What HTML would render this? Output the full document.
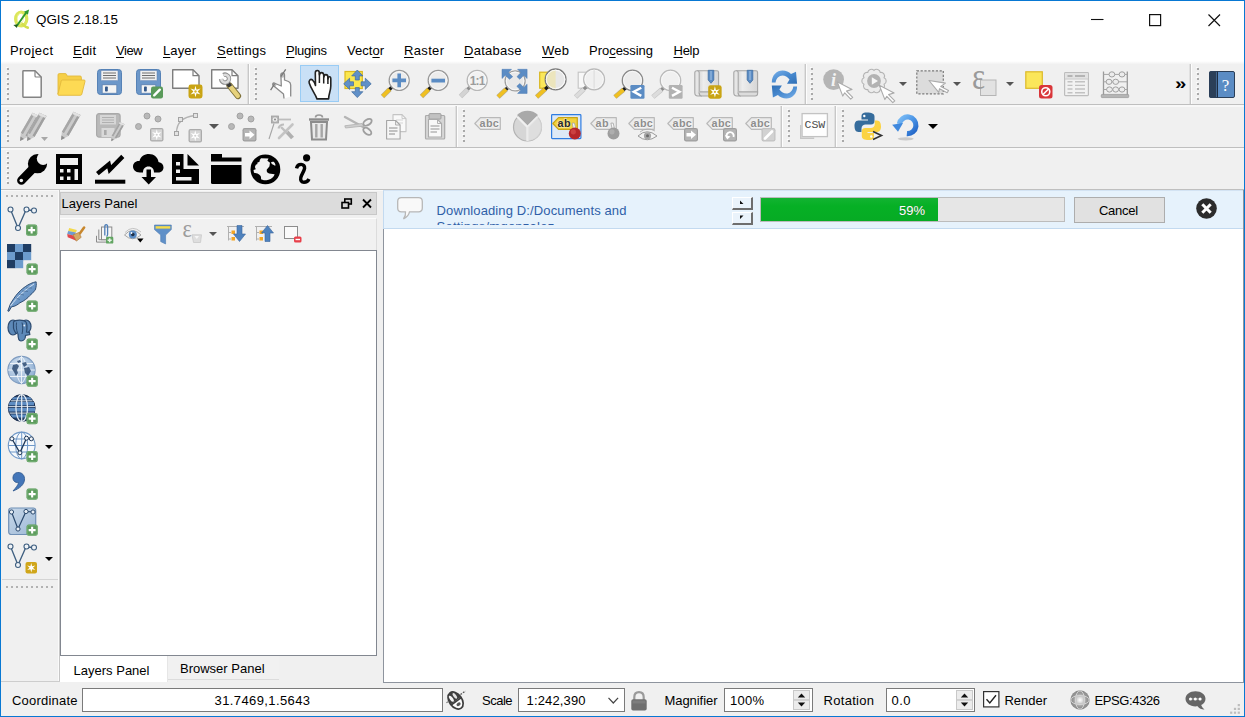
<!DOCTYPE html>
<html lang="en"><head><meta charset="utf-8"><title>QGIS 2.18.15</title>
<style>
*{box-sizing:border-box;margin:0;padding:0}
html,body{width:1245px;height:717px;overflow:hidden}
body{position:relative;background:#f0f0f0;font-family:"Liberation Sans",sans-serif;font-size:11px;color:#000}
.abs{position:absolute}
#win{position:absolute;left:0;top:0;width:1245px;height:717px;border:1px solid #0878d3}
#title{position:absolute;left:1px;top:1px;width:1243px;height:30px;background:#fff}
#title .t{position:absolute;left:35px;top:11px;font-size:13.4px;line-height:16px;white-space:nowrap}
#menubar{position:absolute;left:1px;top:31px;width:1243px;height:33px;background:linear-gradient(to bottom,#fff 0,#fff 30px,#fbfbfb 31px,#f6f6f6 32px,#f2f2f2 33px)}
#menubar span{position:absolute;top:12px;font-size:13px;line-height:16px;white-space:nowrap}
#menubar u{text-decoration:underline;text-underline-offset:1px}
.hline{position:absolute;height:1px;left:1px;width:1243px}
.vline{position:absolute;width:1px}
.handle{position:absolute;width:2px;margin-left:0.5px;background:repeating-linear-gradient(to bottom,transparent 0 1px,#a9a9a9 1px 3px,transparent 3px 5px)}
.handle::before{content:"";position:absolute;left:-1px;top:-1px;width:2px;height:100%;background:repeating-linear-gradient(to bottom,transparent 0 1px,#fbfbfb 1px 2px,transparent 2px 5px)}
.hhandle{position:absolute;height:2px;background:repeating-linear-gradient(to right,#b2b2b2 0 2px,transparent 2px 5px)}
.vsep{position:absolute;width:1px;background:#c8c8c8;box-shadow:1px 0 0 #fdfdfd,-1px 0 0 #e0e0e0}
svg{position:absolute;overflow:visible}
.arrow{position:absolute;width:0;height:0;border-left:4.5px solid transparent;border-right:4.5px solid transparent;border-top:4.5px solid #000}
.arrow.g{border-top-color:#555}
.txt{position:absolute;white-space:nowrap;line-height:16px}
.txt u{text-decoration:underline;text-underline-offset:1.5px;text-decoration-skip-ink:none;text-decoration-thickness:1px}
.field{position:absolute;background:#fff;border:1px solid #7a7a7a}

</style></head>
<body>
<div id="title"><div class="t">QGIS 2.18.15</div>
<svg class="ic" style="left:11.5px;top:7.5px" width="18" height="22" viewBox="0 0 18 22"><ellipse cx="8.200" cy="10" rx="5.600" ry="6.900" fill="none" stroke="#dbe65a" stroke-width="3.200"/><path d="M8.500,14.500 C10.500,15 11.500,18.300 14.800,18.600" fill="none" stroke="#d3df4c" stroke-width="2.600" stroke-linecap="round"/><ellipse cx="7.300" cy="9.500" rx="3" ry="5.400" fill="none" stroke="#eef39a" stroke-width="0.900" opacity="0.800"/><path d="M3.800,17 L13.400,3.200" stroke="#2d982d" stroke-width="1.900"/><path d="M16.100,0.600 L10.900,2.700 L14.900,5.700 Z" fill="#2d982d"/><path d="M0.400,15.900 L4.600,15.300 L4,19 Z" fill="#1f5c1f"/></svg>
<svg style="left:1089px;top:13px" width="135" height="14" viewBox="0 0 135 14"><path d="M1,5.500 H13.500" stroke="#111" stroke-width="1.100"/><rect x="59.600" y="0.600" width="11" height="11" fill="none" stroke="#111" stroke-width="1.200"/><path d="M118.500,0.500 L130,12 M130,0.500 L118.500,12" stroke="#111" stroke-width="1.200"/></svg>
</div>
<div id="menubar"></div>
<div class="txt" style="left:10px;top:43px;font-size:13px;letter-spacing:0.42px;">Pro<u>j</u>ect</div>
<div class="txt" style="left:73px;top:43px;font-size:13px;letter-spacing:0.20px;"><u>E</u>dit</div>
<div class="txt" style="left:116px;top:43px;font-size:13px;letter-spacing:-0.48px;"><u>V</u>iew</div>
<div class="txt" style="left:163px;top:43px;font-size:13px;letter-spacing:0.12px;"><u>L</u>ayer</div>
<div class="txt" style="left:217px;top:43px;font-size:13px;letter-spacing:0.29px;"><u>S</u>ettings</div>
<div class="txt" style="left:286px;top:43px;font-size:13px;letter-spacing:-0.27px;"><u>P</u>lugins</div>
<div class="txt" style="left:347px;top:43px;font-size:13px;letter-spacing:0.03px;">Vect<u>o</u>r</div>
<div class="txt" style="left:404px;top:43px;font-size:13px;letter-spacing:0.34px;"><u>R</u>aster</div>
<div class="txt" style="left:464px;top:43px;font-size:13px;letter-spacing:0.26px;"><u>D</u>atabase</div>
<div class="txt" style="left:542px;top:43px;font-size:13px;letter-spacing:0.25px;"><u>W</u>eb</div>
<div class="txt" style="left:589px;top:43px;font-size:13px;letter-spacing:-0.03px;">Pro<u>c</u>essing</div>
<div class="txt" style="left:673.5px;top:43px;font-size:13px;letter-spacing:-0.25px;"><u>H</u>elp</div>

<!-- toolbar separators -->
<div class="hline" style="top:104px;background:#bfbfbf"></div>
<div class="hline" style="top:105px;background:#f8f8f8;height:2px"></div>
<div class="hline" style="top:147px;background:#bfbfbf"></div>
<div class="hline" style="top:148px;background:#f8f8f8;height:2px"></div>
<div class="hline" style="top:189px;background:#bfbfbf"></div>
<div class="hline" style="top:190px;background:#f8f8f8;height:1px"></div>

<!-- Toolbar 1 -->
<div class="handle" style="left:6px;top:67px;height:34px"></div>
<svg class="ic" style="left:22px;top:70px" width="20" height="28" viewBox="0 0 20 28"><path d="M1.500,0.800 H13 L19.200,7 V26.600 Q19.200,27.200 18.600,27.200 H1.500 Q0.900,27.200 0.900,26.600 V1.400 Q0.900,0.800 1.500,0.800 Z" fill="#fff" stroke="#838383" stroke-width="1.500" stroke-linejoin="round"/><path d="M13,0.800 V6 Q13,7 14,7 H19.200" fill="none" stroke="#838383" stroke-width="1.200"/></svg>
<svg class="ic" style="left:56.8px;top:72.5px" width="29" height="23" viewBox="0 0 29 23"><path d="M1,2 Q1,0.600 2.400,0.600 H8.200 Q9.400,0.600 9.700,1.700 L10,3 H23 Q24.400,3 24.400,4.400 V8 H6 L1,21 Z" fill="#f6cf47" stroke="#e2b93c" stroke-width="0.900"/><path d="M5.600,7 H27 Q28.400,7 28,8.400 L24.800,21.200 Q24.500,22.300 23.400,22.300 H1.800 Q0.600,22.300 1,21 L4.200,8.100 Q4.500,7 5.600,7 Z" fill="#fdda54" stroke="#e2b93c" stroke-width="0.900"/></svg>
<svg class="ic" style="left:97px;top:69px" width="25" height="26" viewBox="0 0 25 26"><rect x="0.500" y="0.500" width="24" height="25" rx="3" fill="#6c97c9" stroke="#5682b6"/><rect x="4" y="1.500" width="17" height="10.200" fill="#f0f0f0" stroke="#5a7fb0" stroke-width="0.500"/><path d="M6,4 H19 M6,6.500 H19 M6,9 H19" stroke="#6e6e6e" stroke-width="1.100"/><rect x="5.200" y="15.800" width="14.600" height="8.400" fill="#f4f4f4" stroke="#557aab" stroke-width="0.700"/><rect x="8" y="17.500" width="2.800" height="5" rx="0.800" fill="#34588a"/></svg>
<svg class="ic" style="left:136px;top:69px" width="28" height="30" viewBox="0 0 28 30"><rect x="0.500" y="0.500" width="24" height="25" rx="3" fill="#6c97c9" stroke="#5682b6"/><rect x="4" y="1.500" width="17" height="10.200" fill="#f0f0f0" stroke="#5a7fb0" stroke-width="0.500"/><path d="M6,4 H19 M6,6.500 H19 M6,9 H19" stroke="#6e6e6e" stroke-width="1.100"/><rect x="5.200" y="15.800" width="14.600" height="8.400" fill="#f4f4f4" stroke="#557aab" stroke-width="0.700"/><rect x="8" y="17.500" width="2.800" height="5" rx="0.800" fill="#34588a"/><g transform="translate(15,17.5)"><rect x="0" y="0" width="12" height="12" rx="2.2" fill="#5a9a5a"/><path d="M3.2,8.8 L8.8,3.2" stroke="#fff" stroke-width="2.4" stroke-linecap="round"/></g></svg>
<svg class="ic" style="left:172px;top:69px" width="31" height="30" viewBox="0 0 31 30"><path d="M0.7,0.7 H21 L27,6.7 V19.3 H0.7 Z" fill="#fff" stroke="#7d7d7d" stroke-width="1.4" stroke-linejoin="round"/><path d="M21,0.7 V6.7 H27" fill="none" stroke="#7d7d7d" stroke-width="1.2"/><g transform="translate(16.5,15.5)"><rect x="0" y="0" width="14" height="14" rx="2.400" fill="#c9a414"/><polygon points="7.00,1.20 8.05,5.18 12.02,4.10 9.10,7.00 12.02,9.90 8.05,8.82 7.00,12.80 5.95,8.82 1.98,9.90 4.90,7.00 1.98,4.10 5.95,5.18" fill="#fff"/><circle cx="7" cy="7" r="1.200" fill="#d8b62e"/></g></svg>
<svg class="ic" style="left:211px;top:69px" width="30" height="30" viewBox="0 0 30 30"><path d="M0.7,0.7 H21 L27,6.7 V19.3 H0.7 Z" fill="#fff" stroke="#7d7d7d" stroke-width="1.4" stroke-linejoin="round"/><path d="M21,0.7 V6.7 H27" fill="none" stroke="#7d7d7d" stroke-width="1.2"/><path d="M18.500,16.500 L27,27" stroke="#7d7038" stroke-width="6.200" stroke-linecap="round"/><path d="M18.500,16.500 L26.800,26.800" stroke="#e7d27c" stroke-width="4.400" stroke-linecap="round"/><path d="M15.500,12.500 L19.300,17.500" stroke="#3a3a3a" stroke-width="4.400"/><path d="M12.310,5.970 A4,4 0 1 1 10.020,10.020" fill="none" stroke="#8f8f8f" stroke-width="4.400"/><path d="M12.500,6.200 A3.900,3.900 0 1 1 10.300,9.900" fill="none" stroke="#dcdcdc" stroke-width="2.600"/></svg>
<div class="vsep" style="left:248px;top:64px;height:40px"></div>
<div class="handle" style="left:254px;top:67px;height:34px"></div>
<svg class="ic" style="left:269.7px;top:69px" width="22" height="30" viewBox="0 0 22 30"><path d="M14,29.500 L13.500,25 L3.500,16.800 Q1.800,14.600 4,14 L11.300,17 L10.900,6 Q11,3.900 12.700,3.900 Q14.500,3.900 14.500,6 V11 L18.500,12.500 Q20.700,13.500 20.700,16 V27.600 Z" fill="#fff"/><path d="M14,29.500 L13.500,25 L3.500,16.800 Q1.800,14.600 4,14 L11.300,17 L10.900,6 Q11,3.900 12.700,3.900 Q14.500,3.900 14.500,6 V11 L18.500,12.500 Q20.700,13.500 20.700,16 V27.600" fill="none" stroke="#8a8a8a" stroke-width="1.300" stroke-linejoin="round"/><circle cx="12.300" cy="6.500" r="2.200" fill="#8a8a8a" opacity="0.550"/><circle cx="4.300" cy="15.600" r="2.200" fill="#8a8a8a" opacity="0.550"/><path d="M15.700,0.300 L11,7.500 M0.600,21.200 L4.500,15" stroke="#777" stroke-width="1.300"/></svg>
<div class="abs" style="left:300px;top:65px;width:39px;height:37px;background:#c9e0f6;border:1px solid #99ccf5"></div>
<svg class="ic" style="left:307.6px;top:70px" width="24" height="30" viewBox="0 0 24 30"><path d="M9,28.900 C7.500,24 3,19 1.200,13 C0.500,10.500 2.500,8.500 4.500,10 C6,11.500 7,13.500 7.500,15.500 L7.300,3 C7.300,-0.300 11.300,-0.300 11.300,3 L11.500,5 C11.500,1.800 15.500,1.800 15.700,5 L15.900,7 C16,3.800 19.800,3.800 19.900,7 L20,9 C20.200,6 22.800,6.200 22.800,9 L22.800,16 C22.800,21 20.600,24 20.600,28.900 Z" fill="#fff" stroke="#222" stroke-width="1.600" stroke-linejoin="round"/><path d="M11.400,3 V13 M15.700,5 V13.500 M19.900,7 V14" stroke="#222" stroke-width="1.500" fill="none"/></svg>
<svg class="ic" style="left:344px;top:70px" width="28" height="28" viewBox="0 0 28 28"><rect x="1" y="1.500" width="17.300" height="17" fill="#fbe74e" stroke="#dcb920" stroke-width="1.200"/><g fill="#6090c8" stroke="#3f6a9e" stroke-width="0.700" stroke-linejoin="round"><path d="M13.300,0 L18.900,5.900 H15.300 V10 H11.300 V5.900 H7.700 Z"/><path d="M13.300,27.600 L18.900,21.700 H15.300 V17.600 H11.300 V21.700 H7.700 Z"/><path d="M-0.300,13.800 L5.600,8.200 V11.800 H9.500 V15.800 H5.600 V19.400 Z"/><path d="M27.200,13.800 L21.300,8.200 V11.800 H17.100 V15.800 H21.300 V19.400 Z"/></g></svg>
<svg class="ic" style="left:382px;top:70px" width="29" height="28" viewBox="0 0 29 28"><path d="M0.500,26.500 L7.800,19.200" stroke="#8a6d10" stroke-width="4.800" opacity="0.500"/><path d="M0.700,26.300 L7.800,19.200" stroke="#f0c020" stroke-width="3.600"/><path d="M7.600,19.400 L10.500,16.500" stroke="#1a1a1a" stroke-width="3.400"/><circle cx="17.200" cy="10.400" r="10" fill="#ececec" stroke="#9a9a9a" stroke-width="1.300"/><circle cx="17.200" cy="10.400" r="8.800" fill="none" stroke="#fafafa" stroke-width="1" opacity="0.900"/><path d="M17.200,3.600 V17.200 M10.400,10.400 H24" stroke="#5b8cc4" stroke-width="3.600"/></svg>
<svg class="ic" style="left:421px;top:70px" width="29" height="28" viewBox="0 0 29 28"><path d="M0.500,26.500 L7.800,19.200" stroke="#8a6d10" stroke-width="4.800" opacity="0.500"/><path d="M0.700,26.300 L7.800,19.200" stroke="#f0c020" stroke-width="3.600"/><path d="M7.600,19.400 L10.500,16.500" stroke="#1a1a1a" stroke-width="3.400"/><circle cx="17.200" cy="10.400" r="10" fill="#ececec" stroke="#9a9a9a" stroke-width="1.300"/><circle cx="17.200" cy="10.400" r="8.800" fill="none" stroke="#fafafa" stroke-width="1" opacity="0.900"/><path d="M10.400,10.600 H24" stroke="#5b8cc4" stroke-width="3.800"/></svg>
<svg class="ic" style="left:459.5px;top:70px" width="29" height="28" viewBox="0 0 29 28"><path d="M0.500,26.500 L7.800,19.200" stroke="#9a9a9a" stroke-width="4.800" opacity="0.500"/><path d="M0.700,26.300 L7.800,19.200" stroke="#d4d4d4" stroke-width="3.600"/><path d="M7.600,19.400 L10.500,16.500" stroke="#8c8c8c" stroke-width="3.400"/><circle cx="17.200" cy="10.400" r="10" fill="#f2f2f2" stroke="#b8b8b8" stroke-width="1.300"/><circle cx="17.200" cy="10.400" r="8.800" fill="none" stroke="#fafafa" stroke-width="1" opacity="0.900"/><text x="17.200" y="14.800" font-family="Liberation Sans,sans-serif" font-size="12" font-weight="bold" fill="#9c9c9c" text-anchor="middle" letter-spacing="-0.800">1:1</text></svg>
<svg class="ic" style="left:498px;top:69px" width="30" height="29" viewBox="0 0 30 29"><path d="M0.00,28.00 L8.20,20.20" stroke="#8a6d10" stroke-width="4.800" opacity="0.500"/><path d="M0.20,27.80 L8.20,20.20" stroke="#f0c020" stroke-width="3.600"/><path d="M8.06,20.34 L10.66,17.86" stroke="#1a1a1a" stroke-width="3.400"/><circle cx="17.1" cy="11.9" r="10" fill="#e9e9e9" stroke="#a0a0a0" stroke-width="1.300"/><circle cx="17.1" cy="11.9" r="8.8" fill="none" stroke="#fafafa" stroke-width="1" opacity="0.900"/><g fill="#5b8cc4" stroke="#4a7ab3" stroke-width="0.500"><path d="M4,0.300 H13.500 L10.300,3.500 L14.700,7.700 L11.500,10.300 L7.300,6.300 L4,9.500 Z"/><path d="M29.100,0.300 V9.500 L25.800,6.300 L21.800,10.300 L19,7.700 L22.800,3.500 L19.600,0.300 Z"/><path d="M29.100,24.400 H19.600 L22.800,21.200 L18.800,17.300 L21.800,14.600 L25.800,18.400 L29.100,15.200 Z"/></g></svg>
<svg class="ic" style="left:536.5px;top:69px" width="30" height="29" viewBox="0 0 30 29"><rect x="2.700" y="3.200" width="13" height="16" fill="#fbe85a" stroke="#d9b61e" stroke-width="1.200"/><path d="M-0.40,28.00 L8.30,20.00" stroke="#8a6d10" stroke-width="4.800" opacity="0.500"/><path d="M-0.20,27.80 L8.30,20.00" stroke="#f0c020" stroke-width="3.600"/><path d="M8.15,20.14 L10.81,17.70" stroke="#1a1a1a" stroke-width="3.400"/><circle cx="18.6" cy="10.4" r="10.4" fill="#e7e7e7" stroke="#7e7e7e" stroke-width="1.300"/><circle cx="18.6" cy="10.4" r="9.200000000000001" fill="none" stroke="#fafafa" stroke-width="1" opacity="0.900"/><path d="M18.600,0.900 A9.500,9.500 0 0 0 18.600,19.900 Z" fill="#ece5bd"/><circle cx="18.600" cy="10.400" r="9.200" fill="none" stroke="#fafafa" stroke-width="1" opacity="0.800"/></svg>
<svg class="ic" style="left:575.5px;top:69px" width="30" height="29" viewBox="0 0 30 29"><rect x="2.200" y="3.200" width="13" height="16" fill="#f8f8f8" stroke="#c4c4c4" stroke-width="1.100"/><path d="M-0.40,28.00 L8.00,20.00" stroke="#9a9a9a" stroke-width="4.800" opacity="0.500"/><path d="M-0.20,27.80 L8.00,20.00" stroke="#dcdcdc" stroke-width="3.600"/><path d="M7.86,20.14 L10.46,17.66" stroke="#8c8c8c" stroke-width="3.400"/><circle cx="18.1" cy="10.4" r="10.4" fill="#f0f0f0" stroke="#bababa" stroke-width="1.300"/><circle cx="18.1" cy="10.4" r="9.200000000000001" fill="none" stroke="#fafafa" stroke-width="1" opacity="0.900"/><path d="M18.100,1 V19.800" stroke="#dadada" stroke-width="1"/></svg>
<svg class="ic" style="left:613.5px;top:70px" width="32" height="30" viewBox="0 0 32 30"><path d="M0.90,27.00 L9.60,19.60" stroke="#8a6d10" stroke-width="4.800" opacity="0.500"/><path d="M1.10,26.80 L9.60,19.60" stroke="#f0c020" stroke-width="3.600"/><path d="M9.45,19.73 L12.19,17.40" stroke="#1a1a1a" stroke-width="3.400"/><circle cx="18.5" cy="10.4" r="10.2" fill="#ececec" stroke="#8a8a8a" stroke-width="1.300"/><circle cx="18.5" cy="10.4" r="9.0" fill="none" stroke="#fafafa" stroke-width="1" opacity="0.900"/><rect x="16.400" y="15" width="14.100" height="13.700" rx="1.200" fill="#5b8cc4"/><path d="M27.300,17.700 L19.800,21.800 L27.300,25.900" fill="none" stroke="#fff" stroke-width="2.400"/></svg>
<svg class="ic" style="left:652px;top:70px" width="32" height="30" viewBox="0 0 32 30"><path d="M0.90,27.00 L9.60,19.60" stroke="#9a9a9a" stroke-width="4.800" opacity="0.500"/><path d="M1.10,26.80 L9.60,19.60" stroke="#dcdcdc" stroke-width="3.600"/><path d="M9.45,19.73 L12.19,17.40" stroke="#8c8c8c" stroke-width="3.400"/><circle cx="18.5" cy="10.4" r="10.2" fill="#f0f0f0" stroke="#bababa" stroke-width="1.300"/><circle cx="18.5" cy="10.4" r="9.0" fill="none" stroke="#fafafa" stroke-width="1" opacity="0.900"/><rect x="16.800" y="15" width="13.800" height="13.700" rx="1.200" fill="#b2b2b2"/><path d="M20,17.700 L27.500,21.800 L20,25.900" fill="none" stroke="#fff" stroke-width="2.400"/></svg>
<svg class="ic" style="left:693.5px;top:70px" width="29" height="30" viewBox="0 0 29 30"><defs><linearGradient id="bkg" x1="0" y1="0" x2="1" y2="0"><stop offset="0" stop-color="#d0d0d0"/><stop offset="0.300" stop-color="#ededed"/><stop offset="1" stop-color="#d6d6d6"/></linearGradient></defs><path d="M3,0.800 H23 Q24.600,0.800 24.600,2.400 V22 H6" fill="url(#bkg)" stroke="#a6a6a6" stroke-width="1.100"/><path d="M0.800,2.800 Q0.800,0.800 3,0.800 Q5.200,0.800 5.200,2.800 V22.500 Q5.200,26 8,26 H3.800 Q0.800,26 0.800,22.800 Z" fill="#e6e6e6" stroke="#a6a6a6" stroke-width="1.100"/><path d="M5.200,22.500 Q5.200,26 8,26 H22 Q24.600,26 24.600,23.500 V22 H6" fill="#dcdcdc" stroke="#a6a6a6" stroke-width="1.100"/><path d="M14.200,0.300 H19.800 V10 L17,13.300 L14.200,10 Z" fill="#5b8cc4" stroke="#3f6ea5" stroke-width="0.800"/><path d="M17,1 V10" stroke="#a9c6e6" stroke-width="1"/><g transform="translate(14.200,15.200) scale(0.960)"><rect x="0" y="0" width="14" height="14" rx="2.400" fill="#c9a414"/><polygon points="7.00,1.20 8.05,5.18 12.02,4.10 9.10,7.00 12.02,9.90 8.05,8.82 7.00,12.80 5.95,8.82 1.98,9.90 4.90,7.00 1.98,4.10 5.95,5.18" fill="#fff"/><circle cx="7" cy="7" r="1.200" fill="#d8b62e"/></g></svg>
<svg class="ic" style="left:732.5px;top:70px" width="26" height="27" viewBox="0 0 26 27"><defs><linearGradient id="bkg2" x1="0" y1="0" x2="1" y2="0"><stop offset="0" stop-color="#d0d0d0"/><stop offset="0.300" stop-color="#ededed"/><stop offset="1" stop-color="#d6d6d6"/></linearGradient></defs><path d="M3,0.800 H23 Q24.600,0.800 24.600,2.400 V22 H6" fill="url(#bkg2)" stroke="#a6a6a6" stroke-width="1.100"/><path d="M0.800,2.800 Q0.800,0.800 3,0.800 Q5.200,0.800 5.200,2.800 V22.500 Q5.200,26 8,26 H3.800 Q0.800,26 0.800,22.800 Z" fill="#e6e6e6" stroke="#a6a6a6" stroke-width="1.100"/><path d="M5.200,22.500 Q5.200,26 8,26 H22 Q24.600,26 24.600,23.500 V22 H6" fill="#dcdcdc" stroke="#a6a6a6" stroke-width="1.100"/><path d="M14.200,0.300 H19.800 V10 L17,13.300 L14.200,10 Z" fill="#5b8cc4" stroke="#3f6ea5" stroke-width="0.800"/><path d="M17,1 V10" stroke="#a9c6e6" stroke-width="1"/></svg>
<svg class="ic" style="left:770.5px;top:69.5px" width="27" height="29" viewBox="0 0 27 29"><defs><linearGradient id="rg" x1="0" y1="0" x2="1" y2="1"><stop offset="0" stop-color="#79b1ea"/><stop offset="0.500" stop-color="#4a8bd0"/><stop offset="1" stop-color="#2f6fb6"/></linearGradient></defs><path d="M0.800,12.600 C0.800,5 6,0.600 11.500,0.600 C15,0.600 18,2 20,4 L25,1.700 L26.100,13.700 L16,13.700 L18.500,9.500 C16.500,7 14,5.500 11.600,5.500 C8,5.500 5,8.500 4.600,12.600 Z" fill="url(#rg)"/><path d="M0.800,12.600 C0.800,5 6,0.600 11.500,0.600 C15,0.600 18,2 20,4 L25,1.700 L26.100,13.700 L16,13.700 L18.500,9.500 C16.500,7 14,5.500 11.600,5.500 C8,5.500 5,8.500 4.600,12.600 Z" fill="url(#rg)" transform="rotate(180 13.450 14.550)"/></svg>
<div class="vsep" style="left:805px;top:64px;height:40px"></div>
<div class="handle" style="left:810.500px;top:67px;height:34px"></div>
<svg class="ic" style="left:822.5px;top:69px" width="32" height="32" viewBox="0 0 32 32"><circle cx="10.600" cy="10.600" r="10.400" fill="#b5b5b5"/><text x="10.600" y="16.500" font-family="Liberation Serif,serif" font-style="italic" font-weight="bold" font-size="18" fill="#f3f3f3" text-anchor="middle">i</text><g transform="translate(14.200,12.800)"><path d="M0,0 L14.800,7.600 L9.300,9.300 L15.500,15.500 L13.500,17.300 L7.500,11 L5.600,14.300 Z" fill="#fff" stroke="#ababab" stroke-width="1.100" stroke-linejoin="round"/></g></svg>
<svg class="ic" style="left:861px;top:68.3px" width="32" height="32" viewBox="0 0 32 32"><path d="M23.08,9.72 A3.60,3.60 0 0 1 23.08,16.28 A3.60,3.60 0 0 1 19.23,21.58 A3.60,3.60 0 0 1 13.00,23.60 A3.60,3.60 0 0 1 6.77,21.58 A3.60,3.60 0 0 1 2.92,16.28 A3.60,3.60 0 0 1 2.92,9.72 A3.60,3.60 0 0 1 6.77,4.42 A3.60,3.60 0 0 1 13.00,2.40 A3.60,3.60 0 0 1 19.23,4.42 A3.60,3.60 0 0 1 23.08,9.72 Z" fill="#ececec" stroke="#b4b4b4" stroke-width="1.100"/><circle cx="13" cy="13" r="6.900" fill="#b2b2b2"/><path d="M10.800,9.300 L17,13 L10.800,16.700 Z" fill="#f6f6f6"/><g transform="translate(18.300,17.300)"><path d="M0,0 L14.800,7.600 L9.300,9.300 L15.500,15.500 L13.500,17.300 L7.500,11 L5.600,14.300 Z" fill="#fff" stroke="#ababab" stroke-width="1.100" stroke-linejoin="round"/></g></svg>
<div class="arrow g" style="left:899px;top:82px"></div>
<svg class="ic" style="left:916px;top:70px" width="30" height="29" viewBox="0 0 30 29"><rect x="0.800" y="0.800" width="26.500" height="23" fill="#dcdcdc" stroke="#7a7a7a" stroke-width="1.200" stroke-dasharray="2.200 1.600"/><g transform="translate(13,10.500) rotate(-18)"><path d="M0,0 L14.800,7.600 L9.300,9.300 L15.500,15.500 L13.500,17.300 L7.500,11 L5.600,14.300 Z" fill="#fff" stroke="#ababab" stroke-width="1.100" stroke-linejoin="round"/></g></svg>
<div class="arrow g" style="left:952.500px;top:82px"></div>
<svg class="ic" style="left:972px;top:71px" width="25" height="26" viewBox="0 0 25 26"><rect x="8.500" y="9" width="15.500" height="15.500" fill="#e2e2e2" stroke="#b5b5b5"/><text x="0" y="17.500" font-family="Liberation Serif,serif" font-size="38" fill="#9a9a9a" transform="scale(0.820,1)">ε</text></svg>
<div class="arrow g" style="left:1006px;top:82px"></div>
<svg class="ic" style="left:1025px;top:71px" width="28" height="28" viewBox="0 0 28 28"><rect x="0.800" y="0.800" width="16.500" height="16.500" fill="#fbe65a" stroke="#dcb92a" stroke-width="1.200"/><rect x="14" y="14" width="13.500" height="13.500" rx="2.500" fill="#d9363a"/><circle cx="20.750" cy="20.750" r="4" fill="none" stroke="#fff" stroke-width="1.600"/><path d="M18,23.500 L23.500,18" stroke="#fff" stroke-width="1.600"/></svg>
<svg class="ic" style="left:1064px;top:72px" width="25" height="25" viewBox="0 0 25 25"><rect x="0.600" y="0.600" width="23.800" height="23" rx="0.800" fill="#f2f2f2" stroke="#bdbdbd" stroke-width="1.200"/><rect x="1.200" y="1.200" width="22.600" height="5.600" fill="#e2e2e2"/><path d="M0.600,7 H24.400" stroke="#c4c4c4" stroke-width="0.900"/><path d="M3.500,4 H8.500 M11,4 H21" stroke="#b4b4b4" stroke-width="2.200"/><path d="M3.500,9.800 H8.500 M11,9.800 H21 M3.500,13.400 H8.500 M11,13.400 H21 M3.500,17 H8.500 M11,17 H21 M3.500,20.700 H8.500 M11,20.700 H21" stroke="#c2c2c2" stroke-width="1.400"/></svg>
<svg class="ic" style="left:1101px;top:71px" width="28" height="27" viewBox="0 0 28 27"><path d="M2.500,0.500 V24 M26.300,0.500 V24" stroke="#9a9a9a" stroke-width="1.300"/><rect x="0.300" y="23.400" width="27.400" height="3.200" rx="0.800" fill="#b5b5b5" stroke="#9a9a9a" stroke-width="0.800"/><path d="M2.500,3.400 H26.300 M2.500,10.800 H26.300 M2.500,18.500 H26.300" stroke="#a5a5a5" stroke-width="1"/><g fill="#ececec" stroke="#a0a0a0" stroke-width="1"><ellipse cx="10.900" cy="3.400" rx="2.900" ry="2.600"/><ellipse cx="21" cy="3.400" rx="2.900" ry="2.600"/><ellipse cx="8" cy="10.800" rx="2.900" ry="2.600"/><ellipse cx="14.700" cy="10.800" rx="2.900" ry="2.600"/><ellipse cx="8.500" cy="18.500" rx="2.900" ry="2.600"/><ellipse cx="14.700" cy="18.500" rx="2.900" ry="2.600"/><ellipse cx="21" cy="18.500" rx="2.900" ry="2.600"/></g></svg>
<div class="txt" style="left:1175px;top:75.500px;font-size:17px;font-weight:bold;transform:scaleX(1.2);transform-origin:left center">»</div>
<div class="vsep" style="left:1190px;top:64px;height:40px"></div>
<div class="handle" style="left:1196px;top:67px;height:34px"></div>
<svg class="ic" style="left:1209px;top:71px" width="26" height="27" viewBox="0 0 26 27"><rect x="0.500" y="0.500" width="25" height="26" rx="1.500" fill="#5b8cc4" stroke="#2b3f58"/><rect x="0.500" y="0.500" width="7" height="26" fill="#2b3f58"/><path d="M8.500,0.500 V26.500" stroke="#1d2c40" stroke-width="1"/><text x="16.500" y="19.500" font-family="Liberation Serif,serif" font-size="17" fill="#fff" text-anchor="middle">?</text></svg>

<!-- Toolbar 2 -->
<div class="handle" style="left:6px;top:109px;height:34px"></div>
<svg class="ic" style="left:19px;top:111px" width="30" height="31" viewBox="0 0 30 31"><g transform="translate(0,1) scale(1.0)"><path d="M13.500,0.800 L20.500,4 L8.500,25 L1.800,21 Z" fill="#b9b9b9"/><path d="M13.500,0.800 L15.800,1.900 L4,22.300 L1.800,21 Z" fill="#a6a6a6"/><path d="M18.200,3 L20.500,4 L8.500,25 L6.300,23.700 Z" fill="#a0a0a0"/><path d="M15.800,1.900 L18.200,3 L6.300,23.700 L4,22.300 Z" fill="#cbcbcb"/><path d="M13.500,0.800 L20.500,4 L19.300,6.100 L12.300,2.900 Z" fill="#e2e2e2"/><path d="M1.800,21 L8.500,25 L1,29 Z" fill="#c9c9c9"/><path d="M1,29 L1.500,24.500 L5,26.900 Z" fill="#8e8e8e"/></g><g transform="translate(7,1) scale(1.0)"><path d="M13.500,0.800 L20.500,4 L8.500,25 L1.800,21 Z" fill="#b9b9b9"/><path d="M13.500,0.800 L15.800,1.900 L4,22.300 L1.800,21 Z" fill="#a6a6a6"/><path d="M18.200,3 L20.500,4 L8.500,25 L6.300,23.700 Z" fill="#a0a0a0"/><path d="M15.800,1.900 L18.200,3 L6.300,23.700 L4,22.300 Z" fill="#cbcbcb"/><path d="M13.500,0.800 L20.500,4 L19.300,6.100 L12.300,2.900 Z" fill="#e2e2e2"/><path d="M1.800,21 L8.500,25 L1,29 Z" fill="#c9c9c9"/><path d="M1,29 L1.500,24.500 L5,26.900 Z" fill="#8e8e8e"/></g><path d="M22,26 H29 L25.500,30 Z" fill="#a8a8a8"/></svg>
<svg class="ic" style="left:60px;top:111px" width="22" height="31" viewBox="0 0 22 31"><g transform="translate(0,0) scale(1.0)"><path d="M13.500,0.800 L20.500,4 L8.500,25 L1.800,21 Z" fill="#b9b9b9"/><path d="M13.500,0.800 L15.800,1.900 L4,22.300 L1.800,21 Z" fill="#a6a6a6"/><path d="M18.200,3 L20.500,4 L8.500,25 L6.300,23.700 Z" fill="#a0a0a0"/><path d="M15.800,1.900 L18.200,3 L6.300,23.700 L4,22.300 Z" fill="#cbcbcb"/><path d="M13.500,0.800 L20.500,4 L19.300,6.100 L12.300,2.900 Z" fill="#e2e2e2"/><path d="M1.800,21 L8.500,25 L1,29 Z" fill="#c9c9c9"/><path d="M1,29 L1.500,24.500 L5,26.900 Z" fill="#8e8e8e"/></g></svg>
<svg class="ic" style="left:96px;top:113px" width="30" height="30" viewBox="0 0 30 30"><rect x="0.600" y="0.600" width="23.500" height="23.500" rx="2.500" fill="#b9b9b9" stroke="#a9a9a9" stroke-width="1.200"/><rect x="4" y="2" width="16" height="9.500" fill="#d6d6d6"/><path d="M6,4.500 H18 M6,7 H18 M6,9.500 H18" stroke="#b0b0b0" stroke-width="1"/><rect x="5.500" y="15" width="13" height="9" fill="#d9d9d9"/><rect x="8" y="17" width="2.600" height="5" fill="#aaa"/><g transform="translate(14.5,8.5) scale(0.68)"><path d="M13.500,0.800 L20.500,4 L8.500,25 L1.800,21 Z" fill="#b9b9b9"/><path d="M13.500,0.800 L15.800,1.900 L4,22.300 L1.800,21 Z" fill="#a6a6a6"/><path d="M18.200,3 L20.500,4 L8.500,25 L6.300,23.700 Z" fill="#a0a0a0"/><path d="M15.800,1.900 L18.200,3 L6.300,23.700 L4,22.300 Z" fill="#cbcbcb"/><path d="M13.500,0.800 L20.500,4 L19.300,6.100 L12.300,2.900 Z" fill="#e2e2e2"/><path d="M1.800,21 L8.500,25 L1,29 Z" fill="#c9c9c9"/><path d="M1,29 L1.500,24.500 L5,26.900 Z" fill="#8e8e8e"/></g></svg>
<svg class="ic" style="left:135px;top:112px" width="29" height="30" viewBox="0 0 29 30"><circle cx="12" cy="4" r="3" fill="#b8b8b8" stroke="#9e9e9e" stroke-width="0.900"/><circle cx="23" cy="7" r="3" fill="#b8b8b8" stroke="#9e9e9e" stroke-width="0.900"/><circle cx="3.500" cy="14.500" r="3" fill="#b8b8b8" stroke="#9e9e9e" stroke-width="0.900"/><g transform="translate(15,16)"><rect x="0" y="0" width="13.500" height="13.500" rx="2" fill="#ababab"/><rect x="1.300" y="1.300" width="10.900" height="10.900" fill="#d6d6d6"/><polygon points="6.75,1.35 7.75,5.02 11.43,4.05 8.75,6.75 11.43,9.45 7.75,8.48 6.75,12.15 5.75,8.48 2.07,9.45 4.75,6.75 2.07,4.05 5.75,5.02" fill="#fff"/><circle cx="6.750" cy="6.750" r="1.100" fill="#cfcfcf"/></g></svg>
<svg class="ic" style="left:174px;top:113px" width="29" height="30" viewBox="0 0 29 30"><path d="M2.500,20 C2.500,11 7,4 21,2.500" fill="none" stroke="#b3b3b3" stroke-width="1.300"/><g fill="#e3e3e3" stroke="#a3a3a3" stroke-width="1"><rect x="0.500" y="18.500" width="4" height="4"/><rect x="4.500" y="4.500" width="4" height="4"/><rect x="19.500" y="0.500" width="4" height="4"/></g><g transform="translate(14.500,16)"><rect x="0" y="0" width="13.500" height="13.500" rx="2" fill="#ababab"/><rect x="1.300" y="1.300" width="10.900" height="10.900" fill="#d6d6d6"/><polygon points="6.75,1.35 7.75,5.02 11.43,4.05 8.75,6.75 11.43,9.45 7.75,8.48 6.75,12.15 5.75,8.48 2.07,9.45 4.75,6.75 2.07,4.05 5.75,5.02" fill="#fff"/><circle cx="6.750" cy="6.750" r="1.100" fill="#cfcfcf"/></g></svg>
<div class="arrow g" style="left:209px;top:124px;border-left-width:5px;border-right-width:5px;border-top-width:5px"></div>
<svg class="ic" style="left:228px;top:112px" width="29" height="30" viewBox="0 0 29 30"><circle cx="12" cy="4" r="3" fill="#b8b8b8" stroke="#9e9e9e" stroke-width="0.900"/><circle cx="23" cy="7" r="3" fill="#b8b8b8" stroke="#9e9e9e" stroke-width="0.900"/><circle cx="3.500" cy="14.500" r="3" fill="#b8b8b8" stroke="#9e9e9e" stroke-width="0.900"/><g transform="translate(14.500,16)"><rect x="0" y="0" width="14" height="13.500" rx="2.200" fill="#9f9f9f"/><rect x="1.200" y="1.200" width="11.600" height="11" rx="1" fill="#b5b5b5"/><path d="M2.500,5 H7 V2.500 L12,6.750 L7,11 V8.500 H2.500 Z" fill="#fff"/></g></svg>
<svg class="ic" style="left:267.5px;top:115px" width="28" height="27" viewBox="0 0 28 27"><rect x="3.500" y="1" width="7" height="7" fill="#b4b4b4" stroke="#a0a0a0" stroke-width="0.800"/><circle cx="7" cy="4.500" r="2.300" fill="#ececec"/><circle cx="7" cy="4.500" r="1" fill="#8a8a8a"/><path d="M11,4.500 H23" stroke="#bdbdbd" stroke-width="1.800"/><path d="M6,8.500 L1,24" stroke="#a5a5a5" stroke-width="1.100"/><path d="M11,23 L24.500,9.500" stroke="#c4c4c4" stroke-width="2.600" stroke-linecap="round"/><path d="M19,17 L24.500,23" stroke="#b0b0b0" stroke-width="4" stroke-linecap="butt"/><path d="M13,12 L19,18" stroke="#c0c0c0" stroke-width="2.400"/><path d="M10.500,13.500 q1,-4 5.500,-4" stroke="#bdbdbd" stroke-width="2.200" fill="none"/></svg>
<svg class="ic" style="left:308px;top:114px" width="22" height="27" viewBox="0 0 22 27"><path d="M1,5.500 H21" stroke="#8c8c8c" stroke-width="2.400"/><path d="M7.500,3.500 Q7.500,1 11,1 Q14.500,1 14.500,3.500" fill="none" stroke="#9a9a9a" stroke-width="1.600"/><path d="M3,8 H19 L18,25.500 H4 Z" fill="#e9e9e9" stroke="#8c8c8c" stroke-width="2"/><path d="M8.300,10 V23.500 M13.700,10 V23.500" stroke="#a6a6a6" stroke-width="2.400"/></svg>
<svg class="ic" style="left:344px;top:116px" width="29" height="21" viewBox="0 0 29 21"><path d="M1,1 L20,11.500" stroke="#b5b5b5" stroke-width="2.400" stroke-linecap="round"/><path d="M0.800,9.800 L18,7.500 L20,10 L1.500,12 Z" fill="#cfcfcf" stroke="#b0b0b0" stroke-width="0.800"/><ellipse cx="23.500" cy="6.300" rx="4.600" ry="2.700" fill="none" stroke="#9f9f9f" stroke-width="1.900" transform="rotate(-32 23.500 6.300)"/><ellipse cx="23.300" cy="15.300" rx="4.600" ry="2.700" fill="none" stroke="#9f9f9f" stroke-width="1.900" transform="rotate(38 23.300 15.300)"/></svg>
<svg class="ic" style="left:386px;top:114px" width="21" height="26" viewBox="0 0 21 26"><path d="M7,0.6 H16 L20,4.6 V17.6 H7 Z" fill="#f9f9f9" stroke="#c4c4c4" stroke-width="1.100" stroke-linejoin="round"/><path d="M16,0.6 V4.6 H20" fill="none" stroke="#c4c4c4" stroke-width="0.900"/><path d="M10,6 H17 M10,9 H17" stroke="#d5d5d5" stroke-width="1"/><path d="M0.6,6.5 H9.6 L14.1,11.0 V25.0 H0.6 Z" fill="#f6f6f6" stroke="#a5a5a5" stroke-width="1.100" stroke-linejoin="round"/><path d="M9.6,6.5 V11.0 H14.1" fill="none" stroke="#a5a5a5" stroke-width="0.900"/><path d="M3,14 H11.500 M3,17 H11.500 M3,20 H9" stroke="#b0b0b0" stroke-width="1.300"/></svg>
<svg class="ic" style="left:424px;top:113px" width="22" height="27" viewBox="0 0 22 27"><rect x="1.500" y="2.500" width="19.200" height="23.500" rx="1" fill="#d6d6d6" stroke="#ababab" stroke-width="1.200"/><rect x="5" y="0.600" width="12" height="5.500" rx="1" fill="#c2c2c2" stroke="#a0a0a0" stroke-width="1"/><path d="M4.5,6.5 H13.5 L17.5,10.5 V24.0 H4.5 Z" fill="#f8f8f8" stroke="#ababab" stroke-width="1.100" stroke-linejoin="round"/><path d="M13.5,6.5 V10.5 H17.5" fill="none" stroke="#ababab" stroke-width="0.900"/><path d="M6.500,13 H15.500 M6.500,16 H15.500 M6.500,19 H13" stroke="#b5b5b5" stroke-width="1.300"/></svg>
<div class="vsep" style="left:456px;top:106px;height:41px"></div>
<div class="handle" style="left:462px;top:109px;height:34px"></div>
<svg class="ic" style="left:474px;top:117px" width="27" height="13" viewBox="0 0 27 13"><path d="M0.800,6.500 L6.500,0.700 H26.3 V12.300 H6.500 Z" fill="#ebebeb" stroke="#b9b9b9" stroke-width="1.200" stroke-linejoin="round"/><text x="5.600" y="10.100" font-family="Liberation Sans,sans-serif" font-weight="700" font-size="10.800" fill="#8e8e8e" stroke="#fff" stroke-width="1.400" stroke-opacity="0.500" paint-order="stroke" letter-spacing="0.300">abc</text></svg>
<svg class="ic" style="left:512px;top:111px" width="31" height="31" viewBox="0 0 31 31"><circle cx="15.500" cy="16" r="14" fill="#d6d6d6" stroke="#b3b3b3" stroke-width="1.200"/><path d="M15.500,16 L5,5.500 A14.800,14.800 0 0 1 26,5.500 Z" fill="#a9a9a9" transform="translate(0,-1.500)"/><path d="M15.500,16 L5.300,5.800 M15.500,16 L25.700,5.800 M15.500,16 V30" stroke="#f0f0f0" stroke-width="2.200"/><path d="M15.500,16 L25.700,5.800 A14,14 0 0 1 15.500,30 Z" fill="#e2e2e2" opacity="0.600"/></svg>
<svg class="ic" style="left:551px;top:114px" width="31" height="25" viewBox="0 0 31 25"><rect x="0.600" y="0.600" width="29.300" height="24" rx="0.800" fill="#dde9f6" stroke="#2f7de1" stroke-width="1.200"/><g transform="translate(1,3)"><path d="M0.800,6.500 L6.500,0.700 H25.3 V12.300 H6.500 Z" fill="#f1d23c" stroke="#c9a414" stroke-width="1.200" stroke-linejoin="round"/><text x="5.600" y="10.100" font-family="Liberation Sans,sans-serif" font-weight="700" font-size="10.800" fill="#2a2a2a" stroke="#fff" stroke-width="1.400" stroke-opacity="0.500" paint-order="stroke" letter-spacing="0.300">ab</text></g><g transform="translate(23.800,19.600)"><path d="M-2.600,-10.500 L-0.300,-10.500 L1.400,-3 L-1,-3 Z" fill="#f6f6f6" stroke="#9a9a9a" stroke-width="0.700"/><circle r="6" fill="#b5262a"/><circle cx="-1.500" cy="-1.800" r="2.600" fill="#d44b4b" opacity="0.700"/></g></svg>
<svg class="ic" style="left:589px;top:114px" width="31" height="25" viewBox="0 0 31 25"><g transform="translate(1,3)"><path d="M0.800,6.500 L6.500,0.700 H26.3 V12.300 H6.500 Z" fill="#ebebeb" stroke="#b9b9b9" stroke-width="1.200" stroke-linejoin="round"/><text x="5.600" y="10.100" font-family="Liberation Sans,sans-serif" font-weight="700" font-size="10.800" fill="#8e8e8e" stroke="#fff" stroke-width="1.400" stroke-opacity="0.500" paint-order="stroke" letter-spacing="0.300">ab</text></g><g transform="translate(24.500,19.600)"><path d="M-2.600,-10.500 L-0.300,-10.500 L1.400,-3 L-1,-3 Z" fill="#f6f6f6" stroke="#9a9a9a" stroke-width="0.700"/><circle r="6" fill="#9d9d9d"/><circle cx="-1.500" cy="-1.800" r="2.600" fill="#b5b5b5" opacity="0.700"/></g></svg>
<svg class="ic" style="left:628px;top:117px" width="30" height="25" viewBox="0 0 30 25"><g transform="translate(0,0)"><path d="M0.800,6.500 L6.500,0.700 H26.3 V12.300 H6.500 Z" fill="#ebebeb" stroke="#b9b9b9" stroke-width="1.200" stroke-linejoin="round"/><text x="5.600" y="10.100" font-family="Liberation Sans,sans-serif" font-weight="700" font-size="10.800" fill="#8e8e8e" stroke="#fff" stroke-width="1.400" stroke-opacity="0.500" paint-order="stroke" letter-spacing="0.300">abc</text></g><path d="M10,19 Q19,10.500 29,19 Q19,26.500 10,19 Z" fill="#f4f4f4" stroke="#9a9a9a" stroke-width="1"/><circle cx="19.500" cy="18.800" r="3.600" fill="#a6a6a6"/><circle cx="19.500" cy="18.800" r="1.500" fill="#6a6a6a"/><path d="M12,15 Q19,9.500 27,14" fill="none" stroke="#b0b0b0" stroke-width="0.900"/></svg>
<svg class="ic" style="left:667px;top:117px" width="31" height="25" viewBox="0 0 31 25"><path d="M0.800,6.500 L6.500,0.700 H26.3 V12.300 H6.500 Z" fill="#ebebeb" stroke="#b9b9b9" stroke-width="1.200" stroke-linejoin="round"/><text x="5.600" y="10.100" font-family="Liberation Sans,sans-serif" font-weight="700" font-size="10.800" fill="#8e8e8e" stroke="#fff" stroke-width="1.400" stroke-opacity="0.500" paint-order="stroke" letter-spacing="0.300">abc</text><g transform="translate(17,11)"><rect x="0" y="0" width="14" height="13.500" rx="2.200" fill="#9f9f9f"/><rect x="1.200" y="1.200" width="11.600" height="11" rx="1" fill="#b5b5b5"/><path d="M2.500,5 H7 V2.500 L12,6.750 L7,11 V8.500 H2.500 Z" fill="#fff"/></g></svg>
<svg class="ic" style="left:706px;top:117px" width="31" height="25" viewBox="0 0 31 25"><path d="M0.800,6.500 L6.500,0.700 H26.3 V12.300 H6.500 Z" fill="#ebebeb" stroke="#b9b9b9" stroke-width="1.200" stroke-linejoin="round"/><text x="5.600" y="10.100" font-family="Liberation Sans,sans-serif" font-weight="700" font-size="10.800" fill="#8e8e8e" stroke="#fff" stroke-width="1.400" stroke-opacity="0.500" paint-order="stroke" letter-spacing="0.300">abc</text><g transform="translate(17,11)"><rect x="0" y="0" width="14" height="13.500" rx="2.200" fill="#9f9f9f"/><rect x="1.200" y="1.200" width="11.600" height="11" rx="1" fill="#b5b5b5"/><path d="M4,9.500 A3.600,3.600 0 1 1 10.500,9" fill="none" stroke="#fff" stroke-width="1.900"/><path d="M2,7 L4.200,11.500 L7.500,8.500 Z" fill="#fff"/></g></svg>
<svg class="ic" style="left:745px;top:117px" width="31" height="25" viewBox="0 0 31 25"><path d="M0.800,6.500 L6.500,0.700 H26.3 V12.300 H6.500 Z" fill="#ebebeb" stroke="#b9b9b9" stroke-width="1.200" stroke-linejoin="round"/><text x="5.600" y="10.100" font-family="Liberation Sans,sans-serif" font-weight="700" font-size="10.800" fill="#8e8e8e" stroke="#fff" stroke-width="1.400" stroke-opacity="0.500" paint-order="stroke" letter-spacing="0.300">abc</text><g transform="translate(16.500,11)"><rect x="0" y="0" width="14" height="13.500" rx="2.200" fill="#c2c2c2"/><rect x="1.200" y="1.200" width="11.600" height="11" rx="1" fill="#d2d2d2"/><path d="M3.500,10.500 L10.500,3.500" stroke="#fff" stroke-width="2.600" stroke-linecap="round"/></g></svg>
<div class="vsep" style="left:781px;top:106px;height:41px"></div>
<div class="handle" style="left:787px;top:109px;height:34px"></div>
<svg class="ic" style="left:799.5px;top:113px" width="30" height="27" viewBox="0 0 30 27"><path d="M0.700,12 V25.200 H14.200" fill="none" stroke="#c6c6c6" stroke-width="1.400"/><rect x="2.100" y="0.600" width="25.300" height="23" fill="#fefefe" stroke="#c3c3c3" stroke-width="1.300"/><text x="14.900" y="15.300" font-family="Liberation Mono,monospace" font-size="11.600" fill="#4c4c4c" text-anchor="middle">CSW</text></svg>
<div class="vsep" style="left:835px;top:106px;height:41px"></div>
<div class="handle" style="left:841px;top:109px;height:34px"></div>
<svg class="ic" style="left:854px;top:112px" width="29" height="29" viewBox="0 0 29 29"><path d="M13,0.500 C8,0.500 7.500,2.500 7.500,4.500 V7.500 H14 V8.500 H4.500 C1,8.500 0.500,12 0.500,14 C0.500,17 1.500,20 4.500,20 H7.500 V16.500 C7.500,14 9.500,12.500 11.500,12.500 H17 C19.500,12.500 20.500,11 20.500,9 V4.500 C20.500,1.500 17.500,0.500 13,0.500 Z" fill="#366c9c"/><circle cx="10.300" cy="4" r="1.200" fill="#fff"/><path d="M14.500,28 C19.500,28 20,26 20,24 V21 H13.500 V20 H23 C26.500,20 27,16.500 27,14.500 C27,11.500 26,8.500 23,8.500 H20.800 V12 C20.800,14.500 18.800,16 16.800,16 H11.300 C8.800,16 7.800,17.500 7.800,19.500 V24 C7.800,27 10.500,28 14.500,28 Z" fill="#fbd343"/><circle cx="17.300" cy="24.500" r="1.200" fill="#fff"/><path d="M19,19.500 L27.500,23.500 L19,27.500" fill="none" stroke="#333" stroke-width="1.600"/></svg>
<svg class="ic" style="left:892px;top:113px" width="28" height="28" viewBox="0 0 28 28"><defs><linearGradient id="rl" x1="0" y1="0" x2="1" y2="1"><stop offset="0" stop-color="#7bbcf5"/><stop offset="0.500" stop-color="#4a94e6"/><stop offset="1" stop-color="#1f62c4"/></linearGradient></defs><ellipse cx="13.700" cy="25.800" rx="8" ry="1.600" fill="#b9b9b9" opacity="0.700"/><path d="M7.380,10.850 A8.350,8.350 0 1 1 14.870,20.620" fill="none" stroke="url(#rl)" stroke-width="5.200"/><path d="M0.200,11.800 L11,10 L6,18.800 Z" fill="#3f88dd"/></svg>
<div class="arrow" style="left:928px;top:124px;border-left-width:5px;border-right-width:5px;border-top-width:5px"></div>

<!-- Toolbar 3 -->
<div class="handle" style="left:6px;top:151px;height:34px"></div>
<svg class="ic" style="left:17px;top:153.5px" width="31" height="31" viewBox="0 0 31 31"><circle cx="20.500" cy="9.700" r="9.600" fill="#000"/><path d="M16,14.500 L4.400,26.400" stroke="#000" stroke-width="8.600" stroke-linecap="round"/><circle cx="26.100" cy="4.600" r="6.300" fill="#f0f0f0"/><path d="M22,-1 L31,-1 L31,9 Z" fill="#f0f0f0"/><circle cx="4.300" cy="26.500" r="1.800" fill="#f0f0f0"/></svg>
<svg class="ic" style="left:56px;top:154px" width="26" height="30" viewBox="0 0 26 30"><path d="M0,0 H26 V30 H0 Z M4,4 V11 H22 V4 Z M4,15 V18.500 H7.500 V15 Z M11,15 V18.500 H14.500 V15 Z M18.500,15 V26 H22 V15 Z M4,22.500 V26 H7.500 V22.500 Z M11,22.500 V26 H14.500 V22.500 Z" fill="#000" fill-rule="evenodd"/></svg>
<svg class="ic" style="left:94.5px;top:154px" width="31" height="30" viewBox="0 0 31 30"><path d="M2.400,19.600 L13.700,10.400 L14.900,15.600 L27.800,2.400" fill="none" stroke="#000" stroke-width="4.400" stroke-linejoin="miter" stroke-miterlimit="6"/><rect x="0" y="25.700" width="30.300" height="4" fill="#000"/></svg>
<svg class="ic" style="left:133px;top:153.5px" width="31" height="31" viewBox="0 0 31 31"><path d="M7,18.500 C2,18.500 0,15 0,12.500 C0,9 3,6.500 6.500,7 C7.500,2.500 11.500,0 16,0 C21,0 25,3.500 25.500,8 C28.500,8.500 30.500,10.500 30.500,13.500 C30.500,16.500 28,18.500 25,18.500 H21 C21,15 19,12.500 15.500,12.500 C12,12.500 10,15 10,18.500 Z" fill="#000"/><path d="M13.500,15.500 H18 V23 H23 L15.700,30.500 L8.500,23 H13.500 Z" fill="#000"/></svg>
<svg class="ic" style="left:172px;top:154px" width="27" height="30" viewBox="0 0 27 30"><path d="M0,0 H11.500 V15 H27 V30 H0 Z M4,8 V11.500 H8 V8 Z M4,15.500 V19 H8 V15.500 Z M4,23 V26.500 H19.500 V23 Z" fill="#000" fill-rule="evenodd"/><path d="M15.500,0 L27,11.500 H15.500 Z" fill="#000"/></svg>
<svg class="ic" style="left:211px;top:154px" width="31" height="30" viewBox="0 0 31 30"><path d="M0,0 H11 V3.500 H30.500 V7.500 H0 Z" fill="#000"/><path d="M0,11 H30.500 V28.500 Q30.500,30 29,30 H1.500 Q0,30 0,28.500 Z" fill="#000"/></svg>
<svg class="ic" style="left:249.5px;top:153.5px" width="31" height="31" viewBox="0 0 31 31"><circle cx="15.400" cy="15.400" r="14.900" fill="#000"/><path d="M11,4.300 L18.500,4.600 L17.400,6.700 L20,8.700 L19.400,12.400 L16.800,15.600 Q16.500,17.800 17.400,18.500 Q19,19.700 20.800,19.700 L24.600,20.200 Q24.200,22 22.600,23.400 Q20.800,25 18.500,25.700 Q16,26.500 13.900,26.300 L11,25.200 Q11.300,23 10.400,21.700 Q9.300,20.200 7.500,19.400 L4,18.800 L3.500,15.900 L5.800,15.300 L4.900,13 L5.800,10.700 L7.500,10.100 L7.200,8.700 L9.500,7.800 L9.800,6.100 Z" fill="#f0f0f0"/><path d="M20.800,8.700 Q22,7.200 23.700,7.800 Q25,8.800 25.400,10.400 L25.200,11.900 Q24,10.800 22.600,10.400 Z" fill="#f0f0f0"/></svg>
<svg class="ic" style="left:295px;top:154px" width="17" height="31" viewBox="0 0 17 31"><circle cx="11.600" cy="3.800" r="3.600" fill="#000"/><path d="M1.500,14.300 C2,11.800 4,10.400 6.100,10.400 C8.300,10.400 9.800,12 9.600,14.300 C9.300,17 6.600,20.200 5.800,23.500 C5.200,26.500 6.500,28.300 9,28.300 C11.300,28.300 13.200,26.800 14,25" fill="none" stroke="#000" stroke-width="3.400" stroke-linecap="butt"/></svg>

<!-- Left toolbar -->
<div class="hhandle" style="left:6px;top:195px;width:49px"></div>
<svg class="ic" style="left:7px;top:206px" width="31" height="30" viewBox="0 0 31 30"><path d="M3.500,3.500 L11,22 L19,4 L27,4.500" fill="none" stroke="#3f5f80" stroke-width="1.300"/><circle cx="3.500" cy="3.500" r="2.500" fill="#eef2f6" stroke="#3f5f80" stroke-width="1.100"/><circle cx="19.500" cy="3.500" r="2.500" fill="#eef2f6" stroke="#3f5f80" stroke-width="1.100"/><circle cx="27" cy="4.500" r="2.500" fill="#eef2f6" stroke="#3f5f80" stroke-width="1.100"/><circle cx="11" cy="22" r="2.500" fill="#eef2f6" stroke="#3f5f80" stroke-width="1.100"/><g transform="translate(18,18)"><g transform="translate(1,0.500) scale(0.940)"><rect x="0" y="0" width="12" height="12" rx="2.400" fill="#5d9c5d"/><rect x="0.700" y="0.700" width="10.600" height="10.600" rx="1.800" fill="none" stroke="#7db67d" stroke-width="0.800"/><path d="M6,2.300 V9.700 M2.300,6 H9.700" stroke="#fff" stroke-width="2.200"/></g></g></svg>
<svg class="ic" style="left:7px;top:244px" width="31" height="31" viewBox="0 0 31 31"><rect x="0" y="0" width="8.200" height="8.200" fill="#1f3d63"/><rect x="8" y="0" width="8.200" height="8.200" fill="#6c9bcc"/><rect x="16" y="0" width="8.200" height="8.200" fill="#1f3d63"/><rect x="0" y="8" width="8.200" height="8.200" fill="#6c9bcc"/><rect x="8" y="8" width="8.200" height="8.200" fill="#1f3d63"/><rect x="16" y="8" width="8.200" height="8.200" fill="#6c9bcc"/><rect x="0" y="16" width="8.200" height="8.200" fill="#1f3d63"/><rect x="8" y="16" width="8.200" height="8.200" fill="#6c9bcc"/><g transform="translate(18.500,19)"><g transform="translate(1,0.500) scale(0.940)"><rect x="0" y="0" width="12" height="12" rx="2.400" fill="#5d9c5d"/><rect x="0.700" y="0.700" width="10.600" height="10.600" rx="1.800" fill="none" stroke="#7db67d" stroke-width="0.800"/><path d="M6,2.300 V9.700 M2.300,6 H9.700" stroke="#fff" stroke-width="2.200"/></g></g></svg>
<svg class="ic" style="left:7px;top:281px" width="31" height="31" viewBox="0 0 31 31"><defs><linearGradient id="fg" x1="0" y1="0" x2="1" y2="1"><stop offset="0" stop-color="#8fb4dc"/><stop offset="1" stop-color="#4f7fb5"/></linearGradient></defs><path d="M29.100,0.800 C22,2 14,8 8.900,14.600 C6,18.500 4,22 3.200,23.500 L0.800,30 L1.900,30.300 L4.500,25.800 C8,25.500 11,23.500 12.900,21.800 C17,20 21,17 22.700,14.600 C26,12 28,9 28.300,8.900 C29.300,6 29.500,3 29.100,0.800 Z" fill="url(#fg)" stroke="#2e4d73" stroke-width="1"/><path d="M27,3 C19,8 10,16 3.500,25" fill="none" stroke="#dfeaf5" stroke-width="0.900"/><path d="M12,13 L17,14 M15,10 L21,10.500 M9,17 L13,18.500 M19,7 L25,7" stroke="#2e4d73" stroke-width="0.600" opacity="0.700"/><g transform="translate(18.500,19)"><g transform="translate(1,0.500) scale(0.940)"><rect x="0" y="0" width="12" height="12" rx="2.400" fill="#5d9c5d"/><rect x="0.700" y="0.700" width="10.600" height="10.600" rx="1.800" fill="none" stroke="#7db67d" stroke-width="0.800"/><path d="M6,2.300 V9.700 M2.300,6 H9.700" stroke="#fff" stroke-width="2.200"/></g></g></svg>
<svg class="ic" style="left:7px;top:319px" width="31" height="31" viewBox="0 0 31 31"><g stroke="#2b4a70" stroke-width="1.200" fill="#5d89b8"><ellipse cx="6" cy="8.500" rx="5" ry="7.500"/><ellipse cx="19" cy="7.500" rx="5" ry="6.500"/><path d="M6.500,3 C8,0.500 17,0.500 19,3 C20.500,6 20,10 19.500,13 L22.500,13.500 L22.800,15.500 L18.500,16.500 C18.500,19 17,22 14,22 C11,22 11,18 11,15 C9,15 7,12 6.500,9 Z"/></g><path d="M9.500,3.500 C9,7 9.500,11 10.500,14 M15,3.500 C16,7 16,11 15,15" fill="none" stroke="#2b4a70" stroke-width="1"/><circle cx="17.300" cy="6.500" r="0.900" fill="#e8f0f8"/><g transform="translate(18.500,19)"><g transform="translate(1,0.500) scale(0.940)"><rect x="0" y="0" width="12" height="12" rx="2.400" fill="#5d9c5d"/><rect x="0.700" y="0.700" width="10.600" height="10.600" rx="1.800" fill="none" stroke="#7db67d" stroke-width="0.800"/><path d="M6,2.300 V9.700 M2.300,6 H9.700" stroke="#fff" stroke-width="2.200"/></g></g></svg>
<div class="arrow" style="left:45px;top:332px"></div>
<svg class="ic" style="left:7px;top:356px" width="31" height="31" viewBox="0 0 31 31"><defs><radialGradient id="wg" cx="0.400" cy="0.350" r="0.700"><stop offset="0" stop-color="#dbe7f4"/><stop offset="1" stop-color="#8aabd0"/></radialGradient></defs><circle cx="14.500" cy="14" r="13.600" fill="url(#wg)" stroke="#7f9cc0" stroke-width="1.200"/><path d="M1,14 H28 M3,7.500 H26 M3,20.500 H26 M14.500,0.500 V27.500 M14.500,0.500 C8,6 8,22 14.500,27.500 M14.500,0.500 C21,6 21,22 14.500,27.500" fill="none" stroke="#f2f6fb" stroke-width="0.900"/><path d="M6,9 l4,-1 l2,2 l-2,4 l1,3 l-2,3 l-2,-4 l-2,-3 z M15,7 l4,-1 l1,3 l-3,2 z M17,12 l5,-1 l2,4 l-3,5 l-3,-3 z M10,5 l3,-1 l1,2 l-3,1 z" fill="#2c4a72" opacity="0.850"/><g transform="translate(18.500,19)"><g transform="translate(1,0.500) scale(0.940)"><rect x="0" y="0" width="12" height="12" rx="2.400" fill="#5d9c5d"/><rect x="0.700" y="0.700" width="10.600" height="10.600" rx="1.800" fill="none" stroke="#7db67d" stroke-width="0.800"/><path d="M6,2.300 V9.700 M2.300,6 H9.700" stroke="#fff" stroke-width="2.200"/></g></g></svg>
<div class="arrow" style="left:45px;top:370px"></div>
<svg class="ic" style="left:7px;top:394px" width="31" height="31" viewBox="0 0 31 31"><circle cx="14.700" cy="14" r="13.400" fill="#223d63" stroke="#16294a" stroke-width="1"/><path d="M2.500,8 H27 V11.200 H1.800 Z M1.300,14 H28.100 V17.600 H1.800 Z M3.500,20.600 H26 L24,23.400 H5.500 Z M6.500,3.200 H23 L25,5.600 H4.500 Z" fill="#5d8cc2"/><ellipse cx="14.700" cy="14" rx="5.800" ry="13.400" fill="none" stroke="#e9eff6" stroke-width="1.200"/><path d="M14.700,0.600 V27.400" stroke="#e9eff6" stroke-width="1.200"/><path d="M1.300,12.600 H28.100 M2.500,19.100 H27 M3.800,6.800 H25.600" stroke="#e9eff6" stroke-width="0.900"/><g transform="translate(18.500,18.500)"><g transform="translate(1,0.500) scale(0.940)"><rect x="0" y="0" width="12" height="12" rx="2.400" fill="#5d9c5d"/><rect x="0.700" y="0.700" width="10.600" height="10.600" rx="1.800" fill="none" stroke="#7db67d" stroke-width="0.800"/><path d="M6,2.300 V9.700 M2.300,6 H9.700" stroke="#fff" stroke-width="2.200"/></g></g></svg>
<svg class="ic" style="left:7px;top:431.5px" width="31" height="31" viewBox="0 0 31 31"><circle cx="14.700" cy="13.500" r="13.400" fill="#f6f9fc" stroke="#6f98c8" stroke-width="1.100"/><ellipse cx="14.700" cy="13.500" rx="6" ry="13.400" fill="none" stroke="#6f98c8" stroke-width="1"/><path d="M14.700,0.100 V26.900 M1.300,13.500 H28.100 M3,7 H26.400 M3,20 H26.400" stroke="#6f98c8" stroke-width="1"/><path d="M4.900,6.800 L12.900,20.800 L19.500,6.200 L24.300,6.800" fill="none" stroke="#1f3858" stroke-width="1.300"/><g fill="#f2f5f9" stroke="#1f3858" stroke-width="1"><circle cx="4.900" cy="6.800" r="2"/><circle cx="19.500" cy="6.200" r="2"/><circle cx="24.300" cy="6.800" r="2"/><circle cx="12.900" cy="20.800" r="2"/></g><g transform="translate(18.500,18.500)"><g transform="translate(1,0.500) scale(0.940)"><rect x="0" y="0" width="12" height="12" rx="2.400" fill="#5d9c5d"/><rect x="0.700" y="0.700" width="10.600" height="10.600" rx="1.800" fill="none" stroke="#7db67d" stroke-width="0.800"/><path d="M6,2.300 V9.700 M2.300,6 H9.700" stroke="#fff" stroke-width="2.200"/></g></g></svg>
<div class="arrow" style="left:45px;top:445px"></div>
<svg class="ic" style="left:10px;top:469px" width="31" height="31" viewBox="0 0 31 31"><path d="M7.500,3.500 C12,3 15,6.500 14.500,11 C14,15.500 10,19.500 3,22 C6,18.500 8.500,15.500 8.500,13.500 C5,14 2.500,11.500 3,8 C3.300,5.500 5,3.800 7.500,3.500 Z" fill="#4476b8" stroke="#2c558c" stroke-width="0.800"/><g transform="translate(15.500,19)"><g transform="translate(1,0.500) scale(0.940)"><rect x="0" y="0" width="12" height="12" rx="2.400" fill="#5d9c5d"/><rect x="0.700" y="0.700" width="10.600" height="10.600" rx="1.800" fill="none" stroke="#7db67d" stroke-width="0.800"/><path d="M6,2.300 V9.700 M2.300,6 H9.700" stroke="#fff" stroke-width="2.200"/></g></g></svg>
<svg class="ic" style="left:7px;top:507px" width="31" height="31" viewBox="0 0 31 31"><defs><linearGradient id="vg" x1="0" y1="0" x2="1" y2="1"><stop offset="0" stop-color="#c9d9ea"/><stop offset="1" stop-color="#9db8d6"/></linearGradient></defs><rect x="1.700" y="1" width="27" height="26.500" rx="2.500" fill="url(#vg)" stroke="#6f8fb5" stroke-width="1.200"/><path d="M4.500,5 L11,22 L19,4.500 L26,5" fill="none" stroke="#2c4a6e" stroke-width="1.200"/><g fill="#e9eff6" stroke="#2c4a6e" stroke-width="1"><circle cx="4.500" cy="5" r="2.100"/><circle cx="19" cy="4.500" r="2.100"/><circle cx="26" cy="5" r="2.100"/><circle cx="11" cy="22" r="2.100"/></g><g transform="translate(18.500,17)"><g transform="translate(1,0.500) scale(0.940)"><rect x="0" y="0" width="12" height="12" rx="2.400" fill="#5d9c5d"/><rect x="0.700" y="0.700" width="10.600" height="10.600" rx="1.800" fill="none" stroke="#7db67d" stroke-width="0.800"/><path d="M6,2.300 V9.700 M2.300,6 H9.700" stroke="#fff" stroke-width="2.200"/></g></g></svg>
<svg class="ic" style="left:7px;top:543px" width="31" height="31" viewBox="0 0 31 31"><path d="M3.500,3.500 L11,22 L19,4 L27,4.500" fill="none" stroke="#3f5f80" stroke-width="1.300"/><circle cx="3.500" cy="3.500" r="2.500" fill="#eef2f6" stroke="#3f5f80" stroke-width="1.100"/><circle cx="19.500" cy="3.500" r="2.500" fill="#eef2f6" stroke="#3f5f80" stroke-width="1.100"/><circle cx="27" cy="4.500" r="2.500" fill="#eef2f6" stroke="#3f5f80" stroke-width="1.100"/><circle cx="11" cy="22" r="2.500" fill="#eef2f6" stroke="#3f5f80" stroke-width="1.100"/><g transform="translate(18.500,19)"><rect x="0" y="0" width="11.500" height="11.500" rx="2" fill="#d0a61a"/><polygon points="5.75,1.05 6.60,4.28 9.82,3.40 7.45,5.75 9.82,8.10 6.60,7.22 5.75,10.45 4.90,7.22 1.68,8.10 4.05,5.75 1.68,3.40 4.90,4.28" fill="#fff"/></g></svg>
<div class="arrow" style="left:45px;top:557px"></div>
<div class="abs" style="left:2px;top:579px;width:56px;height:1px;background:#d4d4d4"></div>
<div class="hhandle" style="left:6px;top:586px;width:49px"></div>
<div class="vline" style="left:59px;top:190px;height:492px;background:#c6c6c6;box-shadow:-1px 0 0 #fafafa"></div>
<div class="abs" style="left:1px;top:681px;width:59px;height:1px;background:#cdcdcd"></div>

<!-- Layers panel -->
<div class="abs" style="left:60px;top:192px;width:317px;height:23px;background:#dcdcdc;border:1px solid #c8c8c8"></div>
<div class="txt" style="left:61.5px;top:196px;font-size:13px;letter-spacing:0.01px;">Layers Panel</div>
<svg style="left:341px;top:198px" width="32" height="12" viewBox="0 0 32 12"><rect x="3.800" y="1" width="6.500" height="5" fill="#d8d8d8" stroke="#000" stroke-width="1.600"/><rect x="1" y="4.500" width="6.500" height="5.500" fill="#d8d8d8" stroke="#000" stroke-width="1.600"/><path d="M22,1.500 L30,9.500 M30,1.500 L22,9.500" stroke="#000" stroke-width="1.800"/></svg>
<div class="abs" style="left:60px;top:218px;width:317px;height:32px;background:#f1f1f1;border-top:1px solid #fcfcfc;border-right:1px solid #dcdcdc"></div>
<svg class="ic" style="left:67px;top:225px" width="18" height="17" viewBox="0 0 18 17"><path d="M2.200,3.100 L9.900,5 L8.900,7.500 L1.200,6 Z" fill="#f3d94a"/><path d="M1.200,6 L8.900,7.500 L7.500,10.800 L0.200,8.900 Z" fill="#6f9bd0"/><path d="M0.200,8.900 L7.500,10.800 L9.400,15.700 L0.700,12.300 Z" fill="#e2474c"/><path d="M17.100,2.600 L12.800,8.400" stroke="#c8872d" stroke-width="2.600" stroke-linecap="round"/><path d="M6,9.900 L11.800,7.500 L14.200,12.300 L9.400,16.100 Z" fill="#d8a965" stroke="#b07f3e" stroke-width="0.700"/></svg>
<svg class="ic" style="left:96.2px;top:224px" width="18" height="20" viewBox="0 0 18 20"><path d="M0.500,11.800 V18.100 H10" fill="none" stroke="#8a8a8a" stroke-width="1"/><path d="M2.800,5.500 V15.700 H11" fill="none" stroke="#8a8a8a" stroke-width="1"/><rect x="5.500" y="3" width="10.300" height="12.700" fill="#f6f6f6" stroke="#8a8a8a" stroke-width="1"/><path d="M8.800,11.500 V2.800 Q8.800,0.600 10.200,0.600 Q11.600,0.600 11.600,2.800 V10.500 Q11.600,12.300 10.300,12.300" fill="none" stroke="#4f7fb8" stroke-width="1.300"/><rect x="10" y="12.800" width="7.300" height="6.800" rx="1.200" fill="#62a562"/><path d="M13.650,14.200 V18.200 M11.600,16.200 H15.700" stroke="#e9f3e9" stroke-width="1.600"/></svg>
<svg class="ic" style="left:123.8px;top:227.5px" width="20" height="15" viewBox="0 0 20 15"><path d="M0.500,7 Q8.500,-2 17,7 Q8.500,14.500 0.500,7 Z" fill="#f2f2f2" stroke="#a5a5a5" stroke-width="1"/><circle cx="8.800" cy="6.500" r="4" fill="#5b8cc4"/><circle cx="8.800" cy="6.500" r="1.800" fill="#1e2f48"/><circle cx="7.500" cy="5" r="0.900" fill="#fff"/><path d="M1,4.500 Q8.500,-3.500 17,4" fill="none" stroke="#bdbdbd" stroke-width="0.900"/><path d="M13,10.500 H19.500 L16.250,14.500 Z" fill="#000"/></svg>
<svg class="ic" style="left:153.5px;top:224.5px" width="18" height="20" viewBox="0 0 18 20"><path d="M0.500,0 H17.300 V4.600 L11.600,10 V19 L6.700,16.600 V10 L0.500,4.600 Z" fill="#5f90c8" stroke="#4a7ab3" stroke-width="0.600"/><rect x="1.600" y="1.200" width="14.700" height="2.400" fill="#f5dc4a"/></svg>
<svg class="ic" style="left:183px;top:225px" width="19" height="18" viewBox="0 0 19 18"><text x="-0.500" y="12" font-family="Liberation Serif,serif" font-size="26" fill="#9c9c9c" transform="scale(0.850,1)">ε</text><path d="M9,9.800 H18.500 L17.500,17.500 H10.500 Z" fill="#dedede" stroke="#c9c9c9" stroke-width="0.800"/><path d="M11.500,11 L13.800,14 L16,11 Z" fill="#f6f6f6"/></svg>
<div class="arrow g" style="left:208.500px;top:232px"></div>
<svg class="ic" style="left:226.5px;top:225px" width="19" height="17" viewBox="0 0 19 17"><path d="M1.500,1.500 V15.500 M0,1.500 H17 M1.500,7.500 H4 M1.500,14 H4" stroke="#b0b0b0" stroke-width="1"/><rect x="4.500" y="5.500" width="3.500" height="3.500" fill="#f5a623"/><rect x="4.500" y="12" width="3.500" height="3.500" fill="#f5a623"/><path d="M10,0.500 H15 V9 H18.500 L12.500,16.500 L6.500,9 H10 Z" fill="#4f82bd" stroke="#3a679d" stroke-width="0.600"/></svg>
<svg class="ic" style="left:255px;top:225px" width="19" height="17" viewBox="0 0 19 17"><path d="M1.500,1.500 V15.500 M0,1.500 H17 M1.500,7.500 H4 M1.500,14 H4" stroke="#b0b0b0" stroke-width="1"/><rect x="4.500" y="5.500" width="3.500" height="3.500" fill="#f5a623"/><rect x="4.500" y="12" width="3.500" height="3.500" fill="#f5a623"/><path d="M10,16.500 H15 V8 H18.500 L12.500,0.500 L6.500,8 H10 Z" fill="#4f82bd" stroke="#3a679d" stroke-width="0.600"/></svg>
<svg class="ic" style="left:283.5px;top:225.5px" width="18" height="17" viewBox="0 0 18 17"><rect x="0.500" y="0.500" width="13" height="12" fill="#fafafa" stroke="#8c8c8c" stroke-width="1"/><rect x="10" y="10.500" width="7.500" height="6" rx="1.500" fill="#e8404a"/><path d="M11.500,13.500 H16" stroke="#fff" stroke-width="1.400"/></svg>
<div class="abs" style="left:60px;top:250px;width:317px;height:406px;background:#fff;border:1px solid #828790"></div>
<!-- tabs -->
<div class="abs" style="left:60px;top:656px;width:108px;height:25.500px;background:#fff;border-right:1px solid #e6e6e6"></div>
<div class="txt" style="left:73.5px;top:662.6px;font-size:13px;letter-spacing:0.01px;">Layers Panel</div>
<div class="abs" style="left:168px;top:656px;width:110.500px;height:23.500px;background:#f1f1f1;border-bottom:1px solid #dcdcdc"></div>
<div class="txt" style="left:180px;top:661px;font-size:13px;">Browser Panel</div>

<!-- Map canvas -->
<div class="abs" style="left:383px;top:190px;width:861px;height:493px;background:#fff;border:1px solid #8e949e;border-top:none"></div>
<div class="abs" style="left:383px;top:190px;width:860px;height:39px;background:#e6f2fc;border:1px solid #c3daf0;border-right:none;border-top-color:#d3e3f3"></div>
<svg class="ic" style="left:397px;top:196.5px" width="26" height="23" viewBox="0 0 26 23"><path d="M4.500,0.700 H21.500 Q25.300,0.700 25.300,4.500 V11 Q25.300,14.800 21.500,14.800 H12.500 Q11.500,19.500 6.500,21.800 Q9,18.500 8.500,14.800 H4.500 Q0.700,14.800 0.700,11 V4.500 Q0.700,0.700 4.500,0.700 Z" fill="#f9f9f9" stroke="#b7b7b7" stroke-width="1.300"/></svg>
<div class="txt" style="left:436.5px;top:202px;font-size:13px;letter-spacing:0.13px;color:#2f5fa8;line-height:17px">Downloading D:/Documents and</div>
<div class="abs" style="left:436.500px;top:218px;width:290px;height:6.500px;overflow:hidden"><div class="txt" style="left:0;top:0;font-size:13px;color:#2f5fa8;line-height:17px;letter-spacing:0.25px">Settings/mgonzalez</div></div>
<!-- spin -->
<div class="abs" style="left:732px;top:197px;width:20.500px;height:13px;background:#eaf3fb;border:1px solid #fff;border-right:2px solid #6e6e6e;border-bottom:2px solid #6e6e6e"></div>
<div class="abs" style="left:732px;top:212px;width:20.500px;height:13px;background:#eaf3fb;border:1px solid #fff;border-right:2px solid #6e6e6e;border-bottom:2px solid #6e6e6e"></div>
<svg style="left:739px;top:200px" width="6" height="22" viewBox="0 0 6 22"><path d="M1,0.500 L4.500,4 H1 Z M1,15.500 H4.500 L1,19 Z" fill="#111"/></svg>
<!-- progress -->
<div class="abs" style="left:760px;top:197px;width:305px;height:25px;background:#e6e6e6;border:1px solid #bcbcbc"></div>
<div class="abs" style="left:761px;top:198px;width:177px;height:23px;background:linear-gradient(to bottom,#12b332 0,#06b025 35%,#06ab24 100%)"></div>
<div class="txt" style="left:882px;top:203px;width:60px;text-align:center;font-size:13px;line-height:16px;color:#fff;text-shadow:0 0 1px #3d6d3d">59%</div>
<div class="abs" style="left:1074px;top:196.500px;width:91px;height:26px;background:#e1e1e1;border:1px solid #adadad"></div>
<div class="txt" style="left:1099px;top:202.5px;font-size:13px;letter-spacing:-0.29px;">Cancel</div>
<svg class="ic" style="left:1196px;top:198px" width="21" height="21" viewBox="0 0 21 21"><circle cx="10.500" cy="10.500" r="10.300" fill="#2c2c2c"/><path d="M6.300,6.300 L14.700,14.700 M14.700,6.300 L6.300,14.700" stroke="#fff" stroke-width="3"/></svg>

<!-- Status bar -->
<div class="txt" style="left:12px;top:693px;font-size:13px;letter-spacing:0.21px;">Coordinate</div>
<div class="field" style="left:82px;top:688px;width:361px;height:24px"></div>
<div class="txt" style="left:214.5px;top:693px;font-size:13px;letter-spacing:0.40px;">31.7469,1.5643</div>
<svg class="ic" style="left:446px;top:689.5px" width="20" height="21" viewBox="0 0 20 21"><g transform="rotate(-36 9.600 10.500)"><ellipse cx="9.600" cy="10.500" rx="6.300" ry="9.500" fill="#fbfbfb" stroke="#3c3c3c" stroke-width="1.700"/><path d="M3.300,10.800 A6.300,9.500 0 0 1 15.900,10.800 Z" fill="#3f3f3f"/><ellipse cx="7.200" cy="6.600" rx="1.500" ry="3.600" fill="#f4f4f4"/><ellipse cx="11.700" cy="6.300" rx="1.400" ry="3.300" fill="#e2e2e2"/><path d="M3.300,11.500 H15.900" stroke="#3c3c3c" stroke-width="1.600"/><ellipse cx="9.800" cy="15.300" rx="2.300" ry="1.600" fill="#555"/></g><path d="M14.500,4.500 L19.500,1" stroke="#555" stroke-width="1.400" stroke-dasharray="1.800 1.200"/><path d="M0.300,12.800 L2.500,11.600" stroke="#888" stroke-width="1.200"/></svg>
<div class="txt" style="left:482px;top:693px;font-size:13px;letter-spacing:-0.50px;">Scale</div>
<div class="field" style="left:517.500px;top:688px;width:107.500px;height:24px"></div>
<div class="txt" style="left:526.5px;top:693px;font-size:13px;letter-spacing:0.15px;">1:242,390</div>
<svg style="left:608px;top:697px" width="11" height="8" viewBox="0 0 11 8"><path d="M0.500,0.800 L5.300,6 L10.100,0.800" fill="none" stroke="#444" stroke-width="1.200"/></svg>
<svg class="ic" style="left:630.5px;top:690.5px" width="16" height="20" viewBox="0 0 16 20"><path d="M3.300,9 V6.200 Q3.300,1.200 8,1.200 Q12.700,1.200 12.700,6.200 V9" fill="none" stroke="#9a9a9a" stroke-width="2.200"/><rect x="0.300" y="8.300" width="15.400" height="11.200" rx="1.800" fill="#6f6f6f"/><rect x="1.500" y="9.500" width="13" height="3" fill="#7d7d7d"/></svg>
<div class="txt" style="left:664.5px;top:693px;font-size:13px;letter-spacing:-0.06px;">Magnifier</div>
<div class="field" style="left:723.500px;top:688px;width:89px;height:24px"></div>
<div class="txt" style="left:730px;top:693px;font-size:13px;letter-spacing:0.25px;">100%</div>
<svg style="left:793px;top:690px" width="17" height="20" viewBox="0 0 17 20"><rect x="0.500" y="0.500" width="16" height="9.300" fill="#ececec" stroke="#c9c9c9"/><rect x="0.500" y="10.200" width="16" height="9.300" fill="#ececec" stroke="#c9c9c9"/><path d="M4.800,7.500 L8.500,3.500 L12.200,7.500 Z M4.800,12.500 L8.500,16.500 L12.200,12.500 Z" fill="#111"/></svg>
<div class="txt" style="left:823.5px;top:693px;font-size:13px;letter-spacing:0.30px;">Rotation</div>
<div class="field" style="left:886px;top:688px;width:89px;height:24px"></div>
<div class="txt" style="left:891.5px;top:693px;font-size:13px;letter-spacing:0.46px;">0.0</div>
<svg style="left:955.5px;top:690px" width="17" height="20" viewBox="0 0 17 20"><rect x="0.500" y="0.500" width="16" height="9.300" fill="#ececec" stroke="#c9c9c9"/><rect x="0.500" y="10.200" width="16" height="9.300" fill="#ececec" stroke="#c9c9c9"/><path d="M4.800,7.500 L8.500,3.500 L12.200,7.500 Z M4.800,12.500 L8.500,16.500 L12.200,12.500 Z" fill="#111"/></svg>
<svg style="left:982.500px;top:691px" width="17" height="17" viewBox="0 0 17 17"><rect x="0.600" y="0.600" width="15.300" height="15.300" fill="#fff" stroke="#333" stroke-width="1.200"/><path d="M3.500,8.300 L6.800,12 L13,4.200" fill="none" stroke="#222" stroke-width="1.400"/></svg>
<div class="txt" style="left:1004.5px;top:693px;font-size:13px;letter-spacing:-0.03px;">Render</div>
<svg class="ic" style="left:1070px;top:690px" width="20" height="20" viewBox="0 0 20 20"><defs><radialGradient id="cg" cx="0.500" cy="0.500" r="0.500"><stop offset="0" stop-color="#ffffff"/><stop offset="0.250" stop-color="#e0e0e0"/><stop offset="0.700" stop-color="#9a9a9a"/><stop offset="1" stop-color="#8a8a8a"/></radialGradient></defs><circle cx="10" cy="10" r="9.700" fill="url(#cg)"/><ellipse cx="10" cy="10" rx="4.500" ry="9.200" fill="none" stroke="#d4d4d4" stroke-width="1"/><ellipse cx="10" cy="10" rx="9.200" ry="4.500" fill="none" stroke="#d4d4d4" stroke-width="1"/><rect x="6.500" y="6.500" width="7" height="7" fill="none" stroke="#c9c9c9" stroke-width="1"/></svg>
<div class="txt" style="left:1094.5px;top:693px;font-size:13px;letter-spacing:-0.39px;">EPSG:4326</div>
<svg class="ic" style="left:1184.5px;top:691px" width="21" height="19" viewBox="0 0 21 19"><path d="M10.500,0.300 C16.200,0.300 20.500,3.600 20.500,7.800 C20.500,10.500 18.800,12.800 16.200,14.100 C16.800,16 18,17.600 19.500,18.500 C16.800,18.700 14.300,17.600 12.600,15.300 C11.900,15.400 11.200,15.400 10.500,15.400 C4.800,15.400 0.500,12 0.500,7.800 C0.500,3.600 4.800,0.300 10.500,0.300 Z" fill="#666"/><circle cx="5.500" cy="8" r="1.500" fill="#fff"/><circle cx="10.300" cy="8" r="1.500" fill="#fff"/><circle cx="15.100" cy="8" r="1.500" fill="#fff"/><path d="M5.500,8 H15" stroke="#fff" stroke-width="0.800" opacity="0.600"/></svg>
<svg style="left:1230px;top:704px" width="12" height="12" viewBox="0 0 12 12"><g fill="#bdbdbd"><rect x="7.700" y="0" width="2.200" height="2.200"/><rect x="3.900" y="3.800" width="2.200" height="2.200"/><rect x="7.700" y="3.800" width="2.200" height="2.200"/><rect x="0.100" y="7.600" width="2.200" height="2.200"/><rect x="3.900" y="7.600" width="2.200" height="2.200"/><rect x="7.700" y="7.600" width="2.200" height="2.200"/></g></svg>
<div id="win"></div>

</body></html>
